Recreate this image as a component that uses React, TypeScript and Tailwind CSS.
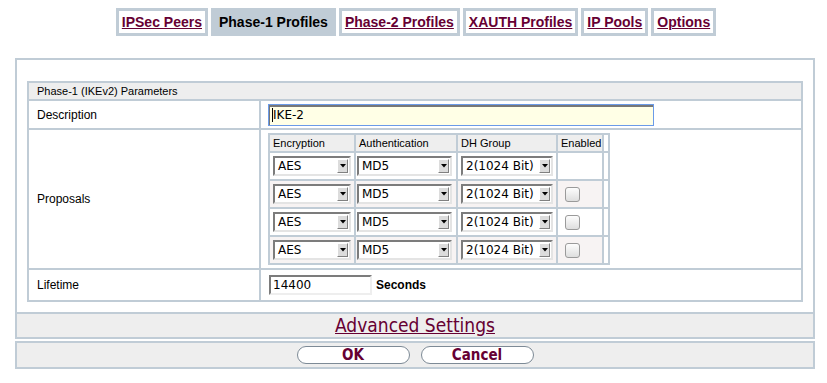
import React from "react";

function Select({ value, w }: { value: string; w: number }) {
  return (
    <div
      className="flex items-center h-[20px] bg-white border-2 border-t-[#7c7c7c] border-l-[#7c7c7c] border-b-[#e4e4e4] border-r-[#e4e4e4] pl-[3px] pr-[1px]"
      style={{ width: w }}
    >
      <span className="flex-1 text-[12px] leading-[14px] text-black" style={{ fontFamily: '"DejaVu Sans", sans-serif' }}>
        {value}
      </span>
      <span className="flex items-center justify-center w-[11px] h-[14px] bg-[#dcdcdc] border border-t-white border-l-white border-b-[#808080] border-r-[#808080]">
        <svg width="6" height="4" viewBox="0 0 6 4">
          <polygon points="0,0 6,0 3,3.5" fill="#000" />
        </svg>
      </span>
    </div>
  );
}

function Checkbox() {
  return (
    <span className="block w-[15px] h-[15px] rounded-[3px] border border-[#9a9a9a] bg-gradient-to-b from-[#fdfdfd] to-[#dedede]" />
  );
}

export default function App() {
  const tabs = [
    { label: "IPSec Peers", active: false },
    { label: "Phase-1 Profiles", active: true },
    { label: "Phase-2 Profiles", active: false },
    { label: "XAUTH Profiles", active: false },
    { label: "IP Pools", active: false },
    { label: "Options", active: false },
  ];
  const rows = [0, 1, 2, 3];
  return (
    <div
      className="w-[827px] h-[383px] bg-white overflow-hidden"
      style={{ fontFamily: '"Liberation Sans", Arial, sans-serif' }}
    >
      <div className="flex justify-center gap-[3px] pt-[8px] pl-[5px]">
        {tabs.map((t) =>
          t.active ? (
            <div
              key={t.label}
              className="h-[28px] border-[3px] border-[#c0ccd6] bg-[#c0ccd6] px-[5px] text-[14px] font-bold leading-[22px] text-black"
            >
              {t.label}
            </div>
          ) : (
            <div
              key={t.label}
              className="h-[28px] border-[3px] border-[#c0ccd6] bg-white px-[3px] text-[14px] font-bold leading-[22px] text-[#660033] underline"
            >
              {t.label}
            </div>
          )
        )}
      </div>

      <div className="ml-[15px] mt-[22px] w-[800px]">
        <div className="border-2 border-[#c0ccd6] pt-[21px] px-[10px] pb-[10px]">
          <div className="grid grid-cols-[230px_1fr] gap-[2px] p-[2px] bg-[#c0ccd6] text-black">
            <div className="col-span-2 bg-[#eeeeee] h-[16px] pl-[8px] text-[11px] leading-[16px]">
              Phase-1 (IKEv2) Parameters
            </div>

            <div className="bg-white h-[27px] flex items-center pl-[8px] text-[12px]">Description</div>
            <div className="bg-white h-[27px] flex items-center pl-[7px]">
              <div className="w-[386px] h-[22px] flex items-center bg-[#ffffe6] border border-[#6b9be8] shadow-[inset_1px_2px_0_#777777] pl-[3px]">
                <span className="w-[1px] h-[14px] bg-black" />
                <span className="text-[12px] leading-[14px]" style={{ fontFamily: '"DejaVu Sans", sans-serif' }}>
                  IKE-2
                </span>
              </div>
            </div>

            <div className="bg-white flex items-center pl-[8px] text-[12px]">Proposals</div>
            <div className="bg-white py-[3px] pl-[7px]">
              <div className="grid w-fit grid-cols-[84px_100px_98px_44px_4px] gap-[2px] p-[2px] bg-[#c0ccd6]">
                <div className="bg-[#eeeeee] h-[16px] pl-[3px] text-[11px] leading-[16px]">Encryption</div>
                <div className="bg-[#eeeeee] h-[16px] pl-[3px] text-[11px] leading-[16px]">Authentication</div>
                <div className="bg-[#eeeeee] h-[16px] pl-[3px] text-[11px] leading-[16px]">DH Group</div>
                <div className="bg-[#eeeeee] h-[16px] pl-[3px] text-[11px] leading-[16px]">Enabled</div>
                <div className="bg-white h-[16px]" />
                {rows.map((r) => {
                  const bg = r % 2 === 1 ? "bg-[#f7f3f3]" : "bg-white";
                  return (
                    <React.Fragment key={r}>
                      <div className={`${bg} h-[26px] flex items-center pl-[3px]`}>
                        <Select value="AES" w={78} />
                      </div>
                      <div className={`${bg} h-[26px] flex items-center pl-[1px]`}>
                        <Select value="MD5" w={95} />
                      </div>
                      <div className={`${bg} h-[26px] flex items-center pl-[3px]`}>
                        <Select value="2(1024 Bit)" w={92} />
                      </div>
                      <div className={`${bg} h-[26px] flex items-center pl-[7px]`}>
                        {r > 0 && <Checkbox />}
                      </div>
                      <div className="bg-white h-[26px]" />
                    </React.Fragment>
                  );
                })}
              </div>
            </div>

            <div className="bg-white h-[30px] flex items-center pl-[8px] text-[12px]">Lifetime</div>
            <div className="bg-white h-[30px] flex items-center pl-[8px] gap-[4px]">
              <div className="w-[103px] h-[20px] flex items-center bg-white border-2 border-t-[#7c7c7c] border-l-[#7c7c7c] border-b-[#eeeeee] border-r-[#eeeeee] pl-[2px]">
                <span className="text-[12px] leading-[14px]" style={{ fontFamily: '"DejaVu Sans", sans-serif' }}>
                  14400
                </span>
              </div>
              <span className="text-[12px] font-bold">Seconds</span>
            </div>
          </div>
        </div>

        <div className="border-x-2 border-b-2 border-[#c0ccd6] bg-[#eeeeee] h-[25px] flex items-center justify-center">
          <span
            className="text-[19px] leading-[23px] text-[#660033] underline"
            style={{ fontFamily: '"DejaVu Sans Condensed", "DejaVu Sans", sans-serif', fontStretch: "condensed" }}
          >
            Advanced Settings
          </span>
        </div>

        <div className="mt-[2px] border-2 border-[#c0ccd6] bg-[#eeeeee] h-[28px] flex items-center justify-center gap-[11px]">
          {["OK", "Cancel"].map((b) => (
            <div
              key={b}
              className="w-[113px] h-[18px] rounded-full border border-[#7d8a96] bg-white flex items-center justify-center text-[15px] font-bold text-[#660033]"
              style={{ fontFamily: '"DejaVu Sans Condensed", "DejaVu Sans", sans-serif', fontStretch: "condensed" }}
            >
              {b}
            </div>
          ))}
        </div>
      </div>
    </div>
  );
}
